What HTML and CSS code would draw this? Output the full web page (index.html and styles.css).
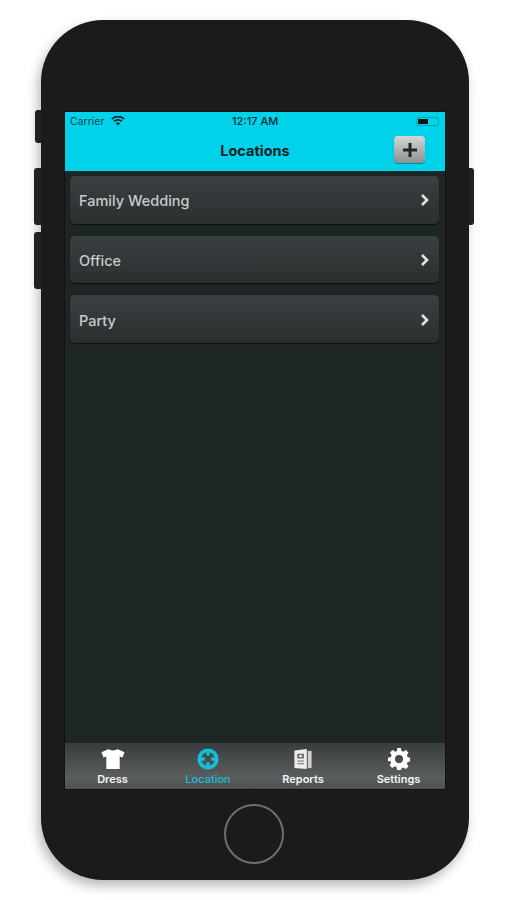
FILE: index.html
```html
<!DOCTYPE html>
<html lang="en">
<head>
<meta charset="utf-8">
<title>Locations</title>
<link rel="stylesheet" href="styles.css">
</head>
<body>
<div class="phone">
  <span class="side side-mute"></span>
  <span class="side side-up"></span>
  <span class="side side-down"></span>
  <span class="side side-power"></span>
  <div class="screen">
    <header class="header">
      <div class="status">
        <div class="status-left">
          <span>Carrier</span>
          <svg class="wifi" width="14" height="10" viewBox="0 0 14 10"><path d="M7 9.600 4.900 7.300a3 3 0 0 1 4.200 0zM3.700 6.100 2.500 4.800a6.400 6.400 0 0 1 9 0l-1.200 1.300a4.700 4.700 0 0 0-6.600 0zM1.400 3.700.2 2.400a9.700 9.700 0 0 1 13.600 0l-1.200 1.300a8 8 0 0 0-11.200 0z" fill="#0c2a33"/></svg>
        </div>
        <span class="status-time">12:17 AM</span>
        <div class="battery"><span class="battery-fill"></span></div>
      </div>
      <div class="navbar">
        <h1 class="title">Locations</h1>
        <button class="add" type="button" aria-label="Add">
          <svg width="16" height="16" viewBox="0 0 16 16"><path d="M6.500 1h3v5.500H15v3H9.500V15h-3V9.500H1v-3h5.500z" fill="#22282a"/></svg>
        </button>
      </div>
    </header>
    <main class="list">
      <div class="row"><span>Family Wedding</span><svg class="chev" width="10" height="14" viewBox="0 0 10 14"><path d="M2 2l5 5-5 5" fill="none" stroke="#e4e6e6" stroke-width="2.600"/></svg></div>
      <div class="row"><span>Office</span><svg class="chev" width="10" height="14" viewBox="0 0 10 14"><path d="M2 2l5 5-5 5" fill="none" stroke="#e4e6e6" stroke-width="2.600"/></svg></div>
      <div class="row"><span>Party</span><svg class="chev" width="10" height="14" viewBox="0 0 10 14"><path d="M2 2l5 5-5 5" fill="none" stroke="#e4e6e6" stroke-width="2.600"/></svg></div>
    </main>
    <nav class="tabs">
      <div class="tab">
        <svg width="26" height="22" viewBox="0 0 26 23"><path d="M8.500 1 C10 3 16 3 17.500 1 L25 4.500 L23 10 L20 9 L20 22 L6 22 L6 9 L3 10 L1 4.500z" fill="#fff"/></svg>
        <span>Dress</span>
      </div>
      <div class="tab tab-active">
        <svg width="22" height="22" viewBox="0 0 24 24"><circle cx="12" cy="12" r="9.500" fill="none" stroke="#16bfd6" stroke-width="4"/><path d="M12 4v4.500M12 15.500V20M4 12h4.500M15.500 12H20" stroke="#16bfd6" stroke-width="3.600"/></svg>
        <span>Location</span>
      </div>
      <div class="tab tab-reports">
        <svg width="20" height="22" viewBox="0 0 20 23"><path d="M1 2.500 14 1v21L1 21z" fill="#ededed"/><path d="M15 3h4v18h-4z" fill="#cfcfcf"/><path d="M4 6h7v5H4zM4 13h7v1H4zM4 16h7v1H4z" fill="#6a6e6e"/><path d="M6 7.500h3v2H6z" fill="#ededed"/></svg>
        <span>Reports</span>
      </div>
      <div class="tab tab-gear">
        <svg width="22" height="22" viewBox="0 0 24 24"><path fill="#fff" fill-rule="evenodd" d="M10 0h4l.7 3.200 2 .8L19.500 2.300l2.800 2.800-1.700 2.800.8 2 3 .7v4l-3 .7-.8 2 1.700 2.800-2.800 2.800-2.800-1.700-2 .8L14 24h-4l-.7-3.200-2-.8-2.800 1.700-2.800-2.800 1.700-2.800-.8-2L0 14.500v-4l3.100-.7.800-2L2.200 5 5 2.300l2.800 1.700 2-.8zM12 7.500a4.500 4.500 0 1 0 0 9 4.500 4.500 0 0 0 0-9z"/></svg>
        <span>Settings</span>
      </div>
    </nav>
  </div>
  <div class="chin"><span class="home"></span></div>
</div>
</body>
</html>
```
FILE: styles.css
```css
* { box-sizing: border-box; }
html, body { margin: 0; padding: 0; background: #fff; }
body { width: 507px; height: 900px; overflow: hidden; font-family: Inter, "Liberation Sans", sans-serif; }

.phone {
  position: relative;
  width: 428px;
  height: 860px;
  margin: 20px 0 0 41px;
  padding: 92px 24px 0;
  background: #1b1b1b;
  border-radius: 62px;
  box-shadow: -3px 6px 12px rgba(0, 0, 0, .28);
  display: flex;
  flex-direction: column;
}
.side { position: absolute; width: 6px; background: #222; }
.side-mute { left: -6px; top: 90px; height: 33px; border-radius: 3px 0 0 3px; }
.side-up { left: -7px; top: 148px; width: 7px; height: 57px; border-radius: 3px 0 0 3px; }
.side-down { left: -7px; top: 212px; width: 7px; height: 57px; border-radius: 3px 0 0 3px; }
.side-power { right: -5px; top: 148px; width: 5px; height: 57px; border-radius: 0 3px 3px 0; }

.screen { width: 380px; height: 677px; background: #1e2525; display: flex; flex-direction: column; box-shadow: 0 0 0 1px #111; }

.header { height: 59px; background: #00d3e9; color: #10252b; flex: none; }
.status { height: 18px; padding: 0 5px; display: flex; align-items: center; justify-content: space-between; position: relative; font-size: 10.500px; }
.status-left { display: flex; align-items: center; gap: 7px; color: #17444f; }
.status-time { position: absolute; left: 167px; font-size: 11px; font-weight: 500; color: #0f2a30; }
.battery { width: 23px; height: 9px; margin-right: 1px; border: 1px solid #149cb0; border-radius: 3px; padding: 1px; }
.battery-fill { display: block; width: 10px; height: 5px; background: #04161a; }

.navbar { height: 41px; padding: 0 20px 0 0; display: flex; align-items: center; justify-content: flex-end; position: relative; }
.title { position: absolute; left: 0; right: 0; top: 11px; margin: 0; text-align: center; font-size: 14.500px; line-height: 20px; font-weight: 700; color: #0c1e24; }
.add { width: 31px; height: 27px; padding: 0; margin-top: -2px; border: 0; border-radius: 4px; background: linear-gradient(#d5d7d7, #8d9191); box-shadow: 0 1px 1px rgba(0, 0, 0, .35); display: flex; align-items: center; justify-content: center; }

.list { flex: 1; padding: 5px 6px 0 5px; display: flex; flex-direction: column; gap: 12px; }
.row {
  height: 48px;
  padding: 0 9px 0 9px;
  border-radius: 5px;
  background: linear-gradient(#3a3f41, #2a2f30);
  box-shadow: 0 1px 1px rgba(0, 0, 0, .6);
  display: flex;
  align-items: center;
  justify-content: space-between;
  color: #c8cbcb;
  font-size: 14.500px;
  font-weight: 500;
}
.row:nth-child(2) { height: 47px; padding-top: 1px; }
.row:nth-child(3) { padding-top: 2px; }
.chev { margin-top: -1px; }

.tabs { height: 46px; flex: none; display: grid; grid-template-columns: repeat(4, 1fr); background: linear-gradient(#373c3d, #5a5e5e 75%, #4d5151); }
.tab { min-width: 0; display: flex; flex-direction: column; align-items: center; padding-top: 5px; color: #f4f4f4; font-size: 11px; font-weight: 600; line-height: 12px; }
.tab svg { display: block; margin-bottom: 3px; }
.tab-active { color: #16bfd6; font-weight: 500; padding-left: 1px; }
.tab-reports { padding-left: 1px; }
.tab-gear { padding-left: 2px; }

.chin { flex: 1; display: flex; justify-content: center; padding: 15px 2px 0 0; }
.home { width: 60px; height: 60px; border: 2px solid #6f6f6f; border-radius: 50%; }
```
